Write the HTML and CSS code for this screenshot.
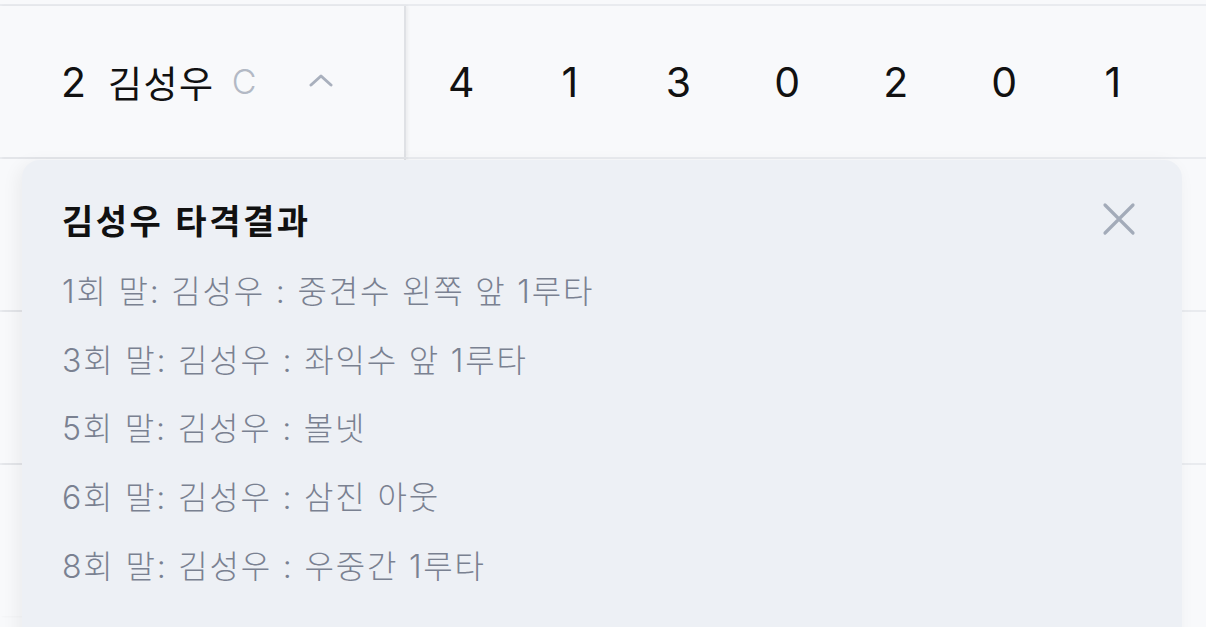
FILE: index.html
```html
<!DOCTYPE html>
<html lang="ko">
<head>
  <meta charset="UTF-8" />
  <meta name="viewport" content="width=device-width, initial-scale=1.0"/>
  <title>타격결과</title>
  <link rel="stylesheet" href="styles.css">
</head>
<body>
<div class="board">
  <div class="row">
    <div class="player">
      <span class="order">2</span>
      <span class="name">김성우</span>
      <span class="pos">C</span>
      <svg class="caret" width="24" height="14" viewBox="0 0 24 14">
        <path d="M2 12 L12 3 L22 12" fill="none" stroke="#a9b0bd" stroke-width="3" stroke-linecap="round" stroke-linejoin="round"/>
      </svg>
    </div>
    <div class="scores">
      <span>4</span><span>1</span><span>3</span><span>0</span><span>2</span><span>0</span><span>1</span><span></span>
    </div>
  </div>
  <div class="row"><div class="player"></div><div class="scores"></div></div>
  <div class="row"><div class="player"></div><div class="scores"></div></div>
  <div class="row"><div class="player"></div><div class="scores"></div></div>

  <div class="popup">
    <div class="popup-head">
      <h2>김성우 타격결과</h2>
      <svg class="close" width="34" height="34" viewBox="0 0 34 34">
        <path d="M3 3 L31 31 M31 3 L3 31" stroke="#a3abb9" stroke-width="3.2" stroke-linecap="round"/>
      </svg>
    </div>
    <ul class="results">
      <li>1회 말: 김성우 : 중견수 왼쪽 앞 1루타</li>
      <li>3회 말: 김성우 : 좌익수 앞 1루타</li>
      <li>5회 말: 김성우 : 볼넷</li>
      <li>6회 말: 김성우 : 삼진 아웃</li>
      <li>8회 말: 김성우 : 우중간 1루타</li>
    </ul>
  </div>
</div>
</body>
</html>
```

FILE: styles.css
```css
body {
  margin: 0;
  font-family: 'Inter', 'Noto Sans CJK KR', sans-serif;
  background-color: #f8f9fb;
  color: #111;
  height: 100vh;
  overflow: hidden;
}
.board {
  position: relative;
  padding-top: 4px;
}
.row {
  display: flex;
  height: 151px;
  border-top: 2px solid #e9ebef;
}
.player {
  width: 406px;
  flex-shrink: 0;
  display: flex;
  align-items: center;
  padding-left: 61px;
  box-sizing: border-box;
  border-right: 2px solid #dfe1e5;
  box-shadow: 2px 0 3px rgba(0, 0, 0, 0.05);
}
.order {
  font-size: 41px;
  margin-right: 22px;
}
.name {
  font-family: 'Noto Sans CJK KR', sans-serif;
  font-size: 37px;
  letter-spacing: 1.5px;
}
.pos {
  font-size: 34px;
  font-weight: 300;
  color: #b3b9c5;
  margin-left: 17px;
}
.caret {
  margin-left: 53px;
  margin-top: -4px;
}
.scores {
  flex-grow: 1;
  display: grid;
  grid-template-columns: repeat(8, 108.6px);
  align-items: center;
  padding-left: 1px;
  font-size: 41px;
}
.scores span {
  text-align: center;
}
.popup {
  position: absolute;
  left: 22px;
  top: 160px;
  width: 1160px;
  height: 520px;
  box-sizing: border-box;
  padding: 36px 46px 0 40px;
  background: #edf0f5;
  border-radius: 18px;
  box-shadow: -4px 4px 18px rgba(0, 0, 0, 0.06);
}
.popup-head {
  display: flex;
  justify-content: space-between;
  align-items: center;
  height: 46px;
}
.popup h2 {
  margin: 0;
  font-family: 'Noto Sans CJK KR', sans-serif;
  font-size: 34px;
  font-weight: bold;
  letter-spacing: 2.5px;
  color: #111;
}
.results {
  list-style: none;
  margin: 16px 0 0;
  padding: 0;
}
.results li {
  height: 68.7px;
  line-height: 68.7px;
  font-size: 32px;
  font-weight: 300;
  letter-spacing: 1.8px;
  color: #7a8191;
}
```
